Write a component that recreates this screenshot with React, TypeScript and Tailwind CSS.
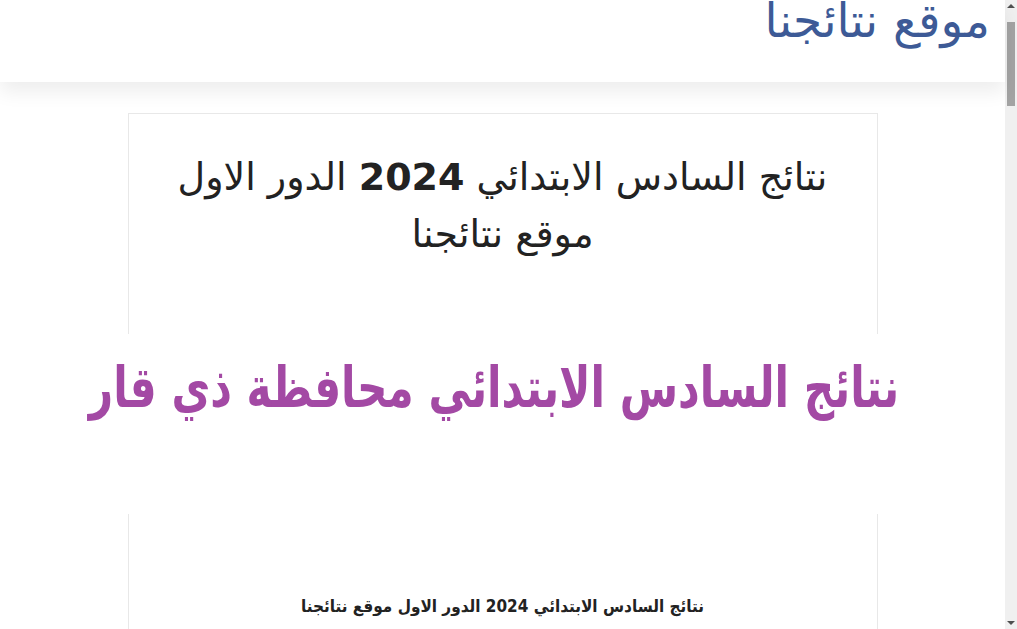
import React from "react";

const condensed = { fontFamily: '"DejaVu Sans Condensed", "DejaVu Sans", sans-serif' };

function Scrollbar() {
  return (
    <div className="flex h-[629px] w-[12px] shrink-0 flex-col items-center bg-[#f0f0f0]">
      <div className="mt-[4px] h-0 w-0 border-x-[4px] border-b-[4px] border-x-transparent border-b-[#505050]" />
      <div className="mt-[14px] h-[84px] w-[8px] bg-[#a3a3a3]" />
      <div className="mt-auto mb-[4px] h-0 w-0 border-x-[4px] border-t-[4px] border-x-transparent border-t-[#505050]" />
    </div>
  );
}

export default function App() {
  return (
    <div className="flex h-[629px] w-full overflow-hidden bg-white">
      <div
        dir="rtl"
        className="min-w-0 flex-1 text-[#222]"
        style={{ fontFamily: '"DejaVu Sans", "Noto Sans", sans-serif' }}
      >
        <header className="relative z-10 h-[82px] overflow-hidden bg-white shadow-[0_10px_18px_rgba(0,0,0,0.07)]">
          <div className="-mt-[11px] pr-[15px] text-[47px] leading-[64px] text-[#3d5a96]">
            موقع نتائجنا
          </div>
        </header>

        <main className="pt-[31px]">
          <article className="mx-auto w-[750px] border border-[#e8e8e8]">
            <h1 className="px-6 pt-[35px] text-center text-[38px] font-normal leading-[57px] text-[#222]">
              نتائج السادس الابتدائي <b className="font-bold">2024</b> الدور الاول
              <br />
              موقع نتائجنا
            </h1>

            <div className="-mx-[60px] mt-[71px] flex h-[180px] items-start justify-center bg-white pt-[9px] pr-[17px]">
              <span
                className="inline-block scale-y-[1.2] whitespace-nowrap text-[47px] font-bold leading-[90px] text-[#a349a4]"
                style={condensed}
              >
                نتائج السادس الابتدائي محافظة ذي قار
              </span>
            </div>

            <p className="pt-[80px] pb-10 text-center text-[17px] font-bold text-[#222]" style={condensed}>
              نتائج السادس الابتدائي 2024 الدور الاول موقع نتائجنا
            </p>
          </article>
        </main>
      </div>
      <Scrollbar />
    </div>
  );
}
